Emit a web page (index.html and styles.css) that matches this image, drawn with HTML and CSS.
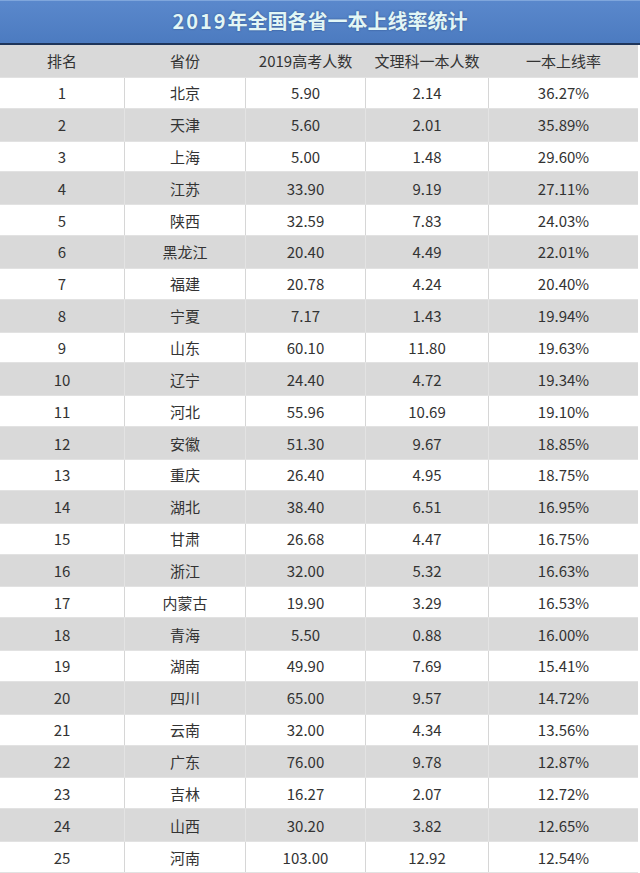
FILE: index.html
```html
<!DOCTYPE html>
<html lang="zh">
<head>
<meta charset="utf-8">
<link rel="stylesheet" href="styles.css">
</head>
<body>
<div class="page">
  <div class="title"><span><span class="yr">2019</span>年全国各省一本上线率统计</span></div>
  <div class="table" id="t">
    <div class="row head"><div>排名</div><div>省份</div><div>2019高考人数</div><div>文理科一本人数</div><div>一本上线率</div></div>
  </div>
</div>
<script>
var d=[["北京","5.90","2.14","36.27%"],["天津","5.60","2.01","35.89%"],["上海","5.00","1.48","29.60%"],["江苏","33.90","9.19","27.11%"],["陕西","32.59","7.83","24.03%"],["黑龙江","20.40","4.49","22.01%"],["福建","20.78","4.24","20.40%"],["宁夏","7.17","1.43","19.94%"],["山东","60.10","11.80","19.63%"],["辽宁","24.40","4.72","19.34%"],["河北","55.96","10.69","19.10%"],["安徽","51.30","9.67","18.85%"],["重庆","26.40","4.95","18.75%"],["湖北","38.40","6.51","16.95%"],["甘肃","26.68","4.47","16.75%"],["浙江","32.00","5.32","16.63%"],["内蒙古","19.90","3.29","16.53%"],["青海","5.50","0.88","16.00%"],["湖南","49.90","7.69","15.41%"],["四川","65.00","9.57","14.72%"],["云南","32.00","4.34","13.56%"],["广东","76.00","9.78","12.87%"],["吉林","16.27","2.07","12.72%"],["山西","30.20","3.82","12.65%"],["河南","103.00","12.92","12.54%"]];
var t=document.getElementById("t");
d.forEach(function(r,i){
  var row=document.createElement("div");
  row.className="row "+(i%2?"even":"odd");
  [String(i+1)].concat(r).forEach(function(c){var e=document.createElement("div");e.textContent=c;row.appendChild(e);});
  t.appendChild(row);
});
</script>
</body>
</html>
```
FILE: styles.css
```css
html, body { margin: 0; padding: 0; background: #fff; }
.page { width: 640px; font-family: "Noto Sans CJK SC", "Noto Sans", sans-serif; color: #333; }
.title {
  background: linear-gradient(#5a88cc, #4c7bc0);
  border-top: 1px solid #7fa6dc;
  box-sizing: border-box;
  border-bottom: 2px solid #1e355a;
  height: 45px;
  display: flex; align-items: center; justify-content: center;
}
.title > span {
  font-size: 20px; font-weight: bold;
  color: #e2f6f6; text-shadow: 0 0 2px rgba(30,60,110,0.7);
  line-height: 1; margin-top: -2px;
}
.title .yr { letter-spacing: 2px; }
.table { width: 638px; }
.row {
  display: grid;
  grid-template-columns: 124px 121px 120px 123px 150px;
  height: 31.846px;
  box-sizing: border-box;
}
.row > div {
  display: flex; align-items: center; justify-content: center;
  font-size: 15px; line-height: 1;
  border-left: 1px solid transparent;
}
.row > div:first-child { border-left: none; }
.head { background: #d9d9d9; }
.head > div { border-left-color: #d9d9d9; }
.odd { background: #fff; border-top: 1px solid #e2e2e2; border-bottom: 1px solid #e2e2e2; }
.odd > div { border-left-color: #d6d6d6; }
.even { background: #d9d9d9; }
.even > div { border-left-color: #e3e3e3; }
```
